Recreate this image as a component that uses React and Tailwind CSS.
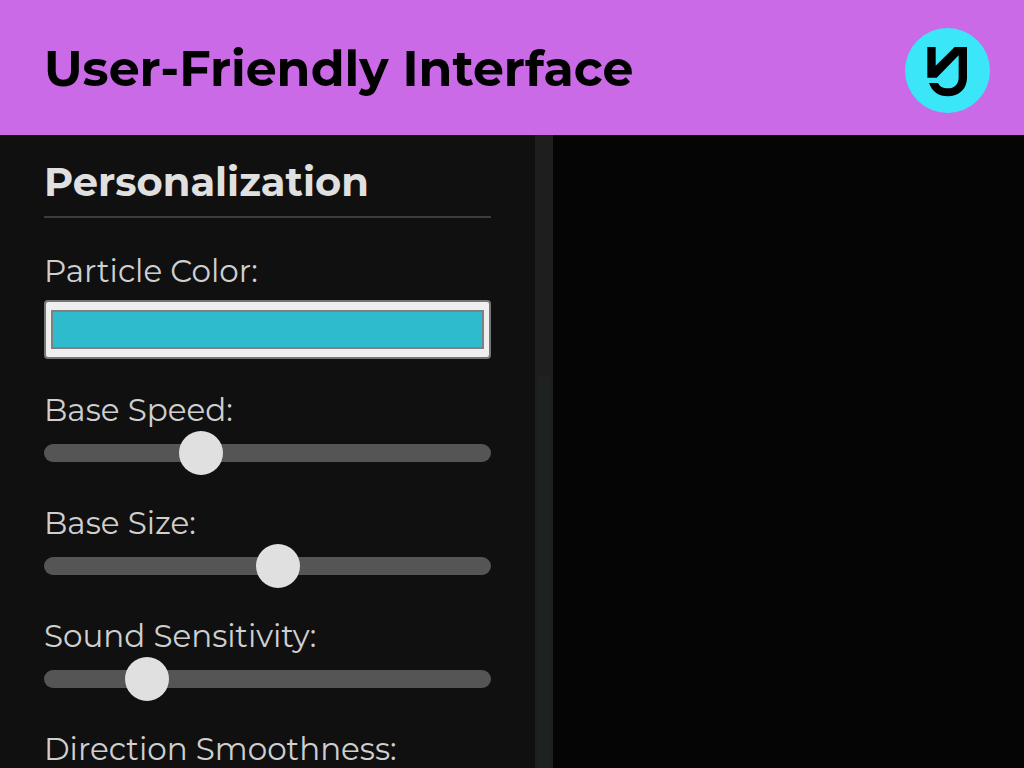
import { useState } from 'react';

const sliders = [
  { id: 'base-speed', label: 'Base Speed:', value: 67 },
  { id: 'base-size', label: 'Base Size:', value: 105 },
  { id: 'sound-sensitivity', label: 'Sound Sensitivity:', value: 40 },
  { id: 'direction-smoothness', label: 'Direction Smoothness:', value: 100 },
];

const Logo = () => (
  <svg className="w-[85px] h-[85px] shrink-0" viewBox="45 52 255 255" role="img" aria-label="Logo">
    <circle cx="172.5" cy="179.5" r="127.5" fill="#3ae6f7" />
    <path
      d="M112 109H137V165L194 109H231V201C231 235 206 257 173 257C147 257 126 243 117 217H144C149 227 158 233 173 233C193 233 206 220 206 201V134L140 201H112Z"
      fill="#000"
    />
  </svg>
);

const SliderField = ({ id, label, value, onChange }) => (
  <div className="flex flex-col gap-4 mb-11">
    <label htmlFor={id} className="text-[31px] leading-[35px] text-[#cfcfcf]">
      {label}
    </label>
    <input
      id={id}
      type="range"
      min="0"
      max="200"
      value={value}
      onChange={(e) => onChange(Number(e.target.value))}
      className="w-full h-[18px] appearance-none rounded-full bg-[#555555] [&::-webkit-slider-thumb]:appearance-none [&::-webkit-slider-thumb]:w-11 [&::-webkit-slider-thumb]:h-11 [&::-webkit-slider-thumb]:rounded-full [&::-webkit-slider-thumb]:bg-[#e0e0e0]"
    />
  </div>
);

const App = () => {
  const [color, setColor] = useState('#2dbbcd');
  const [values, setValues] = useState(
    Object.fromEntries(sliders.map((s) => [s.id, s.value]))
  );

  return (
    <div className="h-screen flex flex-col overflow-hidden bg-[#050505] font-['Montserrat','Inter',sans-serif]">
      <header className="flex items-center justify-between shrink-0 bg-[#cb6ae6] pl-11 pr-[34px] pt-7 pb-[22px]">
        <h1 className="text-[49px] leading-12 pb-1 font-bold text-black">User-Friendly Interface</h1>
        <Logo />
      </header>

      <main className="flex flex-1 min-h-0">
        <aside className="flex w-[54%] min-h-0">
          <div className="flex-1 overflow-hidden bg-[#101010] px-11 pt-6">
            <h2 className="text-[40px] leading-[46px] font-bold text-[#e0e0e0] border-b-2 border-[#3c3c3c] pb-[11px] mb-9">
              Personalization
            </h2>

            <div className="flex flex-col gap-[11px] mb-[34px]">
              <label htmlFor="particle-color" className="text-[31px] leading-[35px] text-[#cfcfcf]">
                Particle Color:
              </label>
              <input
                id="particle-color"
                type="color"
                value={color}
                onChange={(e) => setColor(e.target.value)}
                className="w-full h-[59px] rounded-sm border-2 border-[#767676] bg-[#efefef] px-[5px] py-2 [&::-webkit-color-swatch-wrapper]:p-0 [&::-webkit-color-swatch]:border-2 [&::-webkit-color-swatch]:border-[#808080] [&::-webkit-color-swatch]:rounded-none"
              />
            </div>

            {sliders.map((s) => (
              <SliderField
                key={s.id}
                id={s.id}
                label={s.label}
                value={values[s.id]}
                onChange={(v) => setValues({ ...values, [s.id]: v })}
              />
            ))}
          </div>

          {/* scroll track */}
          <div className="flex flex-col justify-end w-[18px] shrink-0 bg-[#1e1e1e] px-[3px]">
            <div className="h-[62%] rounded-t-sm bg-[#1e2222]" />
          </div>
        </aside>
      </main>
    </div>
  );
};

export default App;
